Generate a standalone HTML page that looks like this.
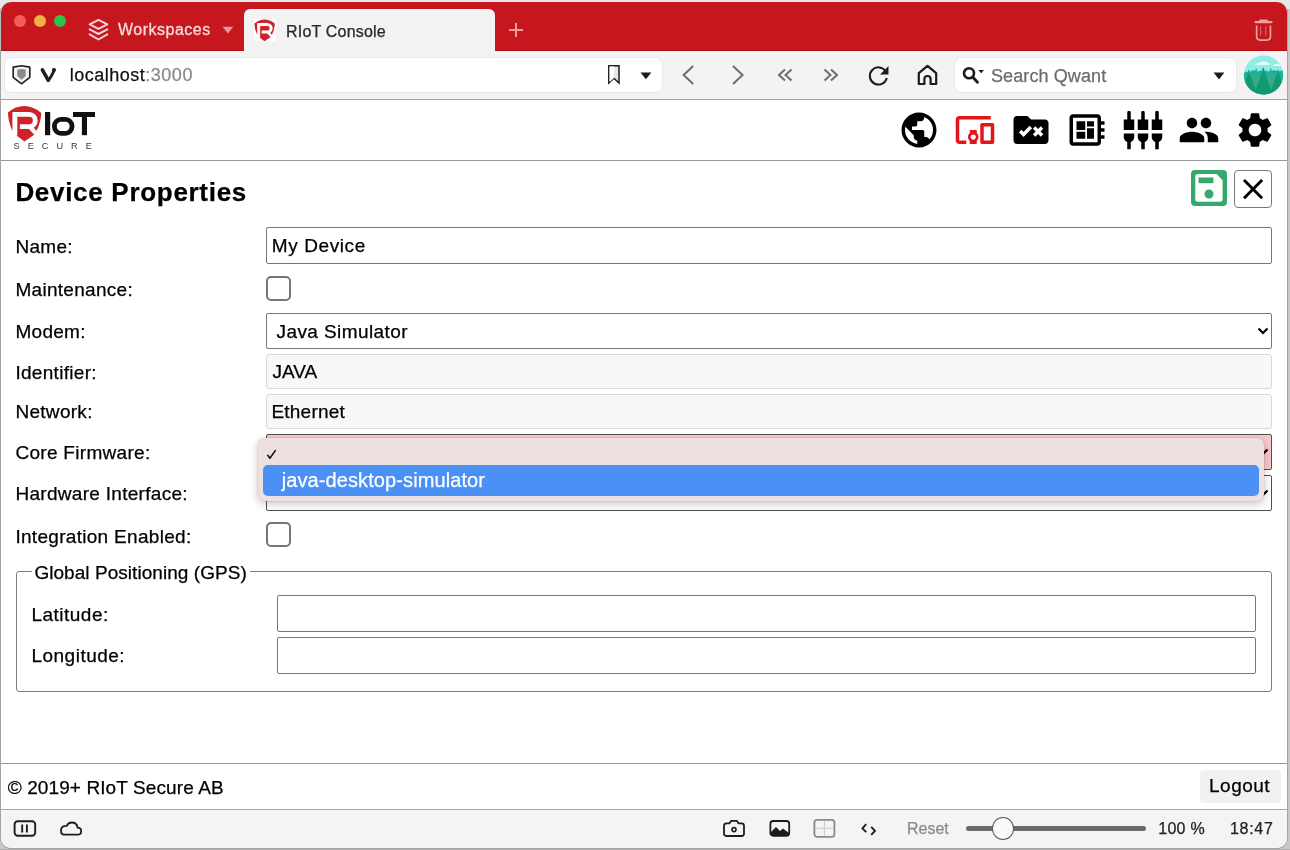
<!DOCTYPE html>
<html><head><meta charset="utf-8">
<style>
html,body{margin:0;padding:0;width:1290px;height:850px;overflow:hidden;background:#e6e7e7;font-family:"Liberation Sans",sans-serif;}
.a{position:absolute;}
.t{position:absolute;line-height:1;white-space:nowrap;-webkit-text-stroke:0.25px currentColor;}
svg{position:absolute;overflow:visible;}
#win{position:absolute;left:1px;top:2px;width:1286px;height:846px;border-radius:10px;overflow:hidden;background:#fff;}
#pg{position:absolute;left:-1px;top:-2px;width:1290px;height:850px;will-change:transform;}
.lbl{font-size:19px;color:#000;left:15.4px;letter-spacing:0.3px;}
.inp{position:absolute;box-sizing:border-box;background:#fff;border:1px solid #767676;border-radius:2px;}
.dis{position:absolute;box-sizing:border-box;background:#f8f8f8;border:1px solid #d9d9d9;border-radius:3px;}
.val{font-size:19px;color:#000;}
</style></head><body>
<div class="a" style="left:0;top:9px;width:1290px;height:841px;background:#c9c9c9;"></div>
<div class="a" style="left:0;top:849px;width:1290px;height:1px;background:#b0b0b0;"></div>
<div class="a" style="left:0;top:50px;width:1288px;height:799px;border-radius:0 0 11px 11px;background:#a4a4a4;"></div>
<div class="a" style="left:0;top:8px;width:1px;height:42px;background:#b7c2c2;"></div>
<div class="a" style="left:1287px;top:9px;width:1px;height:42px;background:#a8a8a8;"></div>
<div id="win"><div id="pg">

<!-- ============ TAB BAR ============ -->
<div class="a" style="left:0;top:0;width:1290px;height:51px;background:#c5171d;"></div>
<div class="a" style="left:0;top:50px;width:1290px;height:1px;background:#b20e14;"></div>
<div class="a" style="left:14px;top:15px;width:12px;height:12px;border-radius:50%;background:#f35e59;"></div>
<div class="a" style="left:34px;top:15px;width:12px;height:12px;border-radius:50%;background:#f1b145;"></div>
<div class="a" style="left:54px;top:15px;width:12px;height:12px;border-radius:50%;background:#31c048;"></div>
<!-- layers icon -->
<svg style="left:86px;top:17px" width="26" height="26" viewBox="0 0 26 26">
 <g fill="none" stroke="#f4d3d4" stroke-width="2" stroke-linejoin="round" stroke-linecap="round">
  <path d="M12.5 2.9 L21.3 7.4 L12.5 11.9 L3.7 7.4 Z"/>
  <path d="M3.7 12.4 L12.5 17 L21.3 12.4"/>
  <path d="M3.7 17.4 L12.5 22.5 L21.3 17.4"/>
 </g>
</svg>
<div class="t" style="left:118px;top:22.4px;font-size:16px;color:#f6d9da;letter-spacing:0.5px;-webkit-text-stroke:0.3px #f6d9da;">Workspaces</div>
<svg style="left:222px;top:26px" width="12" height="8" viewBox="0 0 12 8"><path d="M0.5 0.8 H11.3 L5.9 7.5 Z" fill="#e79a9d"/></svg>
<!-- active tab -->
<div class="a" style="left:244px;top:9px;width:251px;height:42px;background:#f3f3f3;border-radius:6px 6px 0 0;"></div>
<div class="a" style="left:254px;top:19px;width:22px;height:22px;background:#fff;"></div>
<svg style="left:252.3px;top:17.3px" width="27" height="27" viewBox="0 0 44 44">
 <path d="M3.9 10.4 Q20.5 -2.4 37.3 10.9 Q36.6 21 32.6 28.5 L29.8 33.1 L20.4 39.6 L11.9 33.1 L8.3 28.5 Q4.6 21 3.9 10.4 Z" fill="#d0202a"/>
 <path d="M10.85 33.2 V12.4 H25.2 A6.1 6.1 0 0 1 25.2 24.6 H15.8" fill="none" stroke="#fff" stroke-width="4.9"/>
 <path d="M26.2 25 L31.6 31.2" fill="none" stroke="#fff" stroke-width="4.3"/>
 <rect x="8" y="33.1" width="5" height="4" fill="#fff"/>
</svg>
<div class="t" style="left:286px;top:24px;font-size:16px;color:#262626;letter-spacing:0.2px;">RIoT Console</div>
<!-- plus -->
<svg style="left:508px;top:22px" width="16" height="16" viewBox="0 0 16 16"><path d="M8 1 V15 M1 8 H15" stroke="#ee9ea1" stroke-width="2"/></svg>
<!-- trash -->
<svg style="left:1252px;top:18px" width="22" height="26" viewBox="0 0 22 26">
 <path d="M3.5 4.1 H19.5" stroke="#ee9ea1" stroke-width="2.3" stroke-linecap="round"/>
 <path d="M6.5 3.2 L7.8 1.6 H15.2 L16.5 3.2 Z" fill="#ee9ea1"/>
 <path d="M4.65 7.6 V18.5 Q4.65 22.05 8.2 22.05 H14.9 Q18.45 22.05 18.45 18.5 V7.6" fill="none" stroke="#ee9ea1" stroke-width="1.7"/>
 <path d="M8.6 8.2 V17.5 M13.8 8.2 V17.5" stroke="#d96b70" stroke-width="1.1"/>
</svg>

<!-- ============ TOOLBAR ============ -->
<div class="a" style="left:0;top:51px;width:1290px;height:48px;background:#f3f3f3;"></div>
<div class="a" style="left:0;top:99px;width:1290px;height:1px;background:#a3a3a3;"></div>
<div class="a" style="left:5px;top:58px;width:657px;height:34px;background:#fff;border-radius:6px;box-shadow:0 0 0 1px #e9e9e9;"></div>
<!-- shield -->
<svg style="left:12px;top:64px" width="20" height="22" viewBox="0 0 20 22">
 <path d="M1.2 3.1 L9.5 1.8 L17.8 3.1 V13.3 L9.5 19.8 L1.2 13.3 Z" fill="#f2f2f2" stroke="#1f1f1f" stroke-width="1.6" stroke-linejoin="round"/>
 <path d="M5.3 5.4 L9.5 5 L13.7 5.4 V12.1 L9.5 15.8 L5.3 12.1 Z" fill="#898989"/>
</svg>
<!-- vivaldi V -->
<svg style="left:40px;top:67px" width="17" height="17" viewBox="0 0 17 17">
 <path d="M2.4 2.8 L8.3 13.3" fill="none" stroke="#1f1f1f" stroke-width="3.6" stroke-linecap="round"/>
 <path d="M13.9 3 Q13.6 6 8.5 13.3" fill="none" stroke="#1f1f1f" stroke-width="2.8" stroke-linecap="round"/>
 <circle cx="14" cy="3" r="2" fill="#1f1f1f"/>
</svg>
<div class="t" style="left:69.8px;top:66.2px;font-size:18px;color:#111;letter-spacing:0.5px;">localhost<span style="color:#8a8a8a">:3000</span></div>
<!-- bookmark -->
<svg style="left:606px;top:64px" width="16" height="22" viewBox="0 0 16 22">
 <path d="M2.8 1.8 H13 V19 L7.9 14.3 L2.8 19 Z" fill="#e6e6e6" stroke="#1c1c1c" stroke-width="1.5" stroke-linejoin="miter"/>
 <path d="M3.6 2.6 H8 V14 L3.6 18 Z" fill="#fff"/>
</svg>
<svg style="left:640px;top:72px" width="12" height="8" viewBox="0 0 12 8"><path d="M0.5 0.5 H11.3 L5.9 7.3 Z" fill="#1c1c1c"/></svg>
<!-- nav -->
<svg style="left:680px;top:64px" width="16" height="22" viewBox="0 0 16 22"><path d="M13.2 2 L3.6 11 L13.2 20" fill="none" stroke="#6d6d6d" stroke-width="2"/></svg>
<svg style="left:730px;top:64px" width="16" height="22" viewBox="0 0 16 22"><path d="M3 2 L12.6 11 L3 20" fill="none" stroke="#6d6d6d" stroke-width="2"/></svg>
<svg style="left:776px;top:67px" width="18" height="16" viewBox="0 0 18 16"><path d="M9 2.5 L3 8 L9 13.5 M15.5 2.5 L9.5 8 L15.5 13.5" fill="none" stroke="#6d6d6d" stroke-width="2"/></svg>
<svg style="left:822px;top:67px" width="18" height="16" viewBox="0 0 18 16"><path d="M2.5 2.5 L8.5 8 L2.5 13.5 M9 2.5 L15 8 L9 13.5" fill="none" stroke="#6d6d6d" stroke-width="2"/></svg>
<!-- reload -->
<svg style="left:867px;top:63px" width="24" height="24" viewBox="0 0 24 24">
 <path d="M18.8 8.5 A8.6 8.6 0 1 0 19.8 15" fill="none" stroke="#1c1c1c" stroke-width="2"/>
 <path d="M21.5 3 V11.5 H13 Z" fill="#1c1c1c"/>
</svg>
<!-- home -->
<svg style="left:916px;top:63px" width="24" height="24" viewBox="0 0 24 24">
 <path d="M2.8 21 V10.2 L11.5 2.8 L20.2 10.2 V21 H14.6 V16 Q14.6 13 11.5 13 Q8.4 13 8.4 16 V21 Z" fill="none" stroke="#1c1c1c" stroke-width="2.2" stroke-linejoin="round"/>
</svg>
<!-- search -->
<div class="a" style="left:955px;top:58px;width:281px;height:34px;background:#fff;border-radius:6px;box-shadow:0 0 0 1px #e9e9e9;"></div>
<svg style="left:962px;top:66px" width="24" height="19" viewBox="0 0 24 19">
 <circle cx="7" cy="7.3" r="5" fill="none" stroke="#1c1c1c" stroke-width="2.6"/>
 <path d="M10.6 11 L15.5 16.3" stroke="#1c1c1c" stroke-width="2.8" stroke-linecap="round"/>
 <path d="M16.3 4 H22 L19.15 7.2 Z" fill="#1c1c1c"/>
</svg>
<div class="t" style="left:991px;top:66.5px;font-size:18px;color:#6c6c6c;letter-spacing:0.1px;">Search Qwant</div>
<svg style="left:1213px;top:72px" width="12" height="8" viewBox="0 0 12 8"><path d="M0.6 0.5 H11.4 L6 7.4 Z" fill="#1c1c1c"/></svg>
<!-- avatar -->
<svg style="left:1243px;top:55px" width="41" height="41" viewBox="0 0 41 41">
 <defs><clipPath id="avc"><circle cx="20.5" cy="20" r="19.6"/></clipPath></defs>
 <g clip-path="url(#avc)">
  <rect width="41" height="41" fill="#8eeee6"/>
  <path d="M12 9.8 Q13 7.6 16 8 Q18 5.6 21.5 6.8 Q24.5 6.2 25.2 8.2 Q27 8.4 26.5 9.8 Z" fill="#fff" opacity="0.95"/>
  <path d="M29.5 11 Q31.5 8.2 35 9 Q37 9.4 38 11 Z" fill="#fff" opacity="0.9"/>
  <path d="M0 19 L3 16.5 L6 17.5 L10 15 L14 16.5 L20 15 L26 16.5 L31 15 L35 16.5 L41 15 V41 H0 Z" fill="#19b2a0"/>
  <path fill="#3aa98a" d="M13.2 12.7 L14.4 15.9 L13.1 15.9 L15.5 19.1 L14.2 19.1 L16.7 22.3 L15.4 22.3 L17.8 25.5 L16.5 25.5 L19.0 28.7 L17.7 28.7 L20.1 31.9 L18.8 31.9 L21.3 35.1 L20.0 35.1 L22.4 38.3 L21.1 38.3 L23.6 41.5 L22.3 41.5 L24.7 44.7 L23.4 44.7 L23.4 42.0 L3.0 42.0 L3.0 44.7 L1.7 44.7 L4.1 41.5 L2.8 41.5 L5.3 38.3 L4.0 38.3 L6.4 35.1 L5.1 35.1 L7.6 31.9 L6.3 31.9 L8.7 28.7 L7.4 28.7 L9.9 25.5 L8.6 25.5 L11.0 22.3 L9.7 22.3 L12.2 19.1 L10.9 19.1 L13.3 15.9 L12.0 15.9 Z M27.6 12.7 L28.8 15.9 L27.5 15.9 L29.9 19.1 L28.6 19.1 L31.1 22.3 L29.8 22.3 L32.2 25.5 L30.9 25.5 L33.4 28.7 L32.1 28.7 L34.5 31.9 L33.2 31.9 L35.7 35.1 L34.4 35.1 L36.8 38.3 L35.5 38.3 L38.0 41.5 L36.7 41.5 L39.1 44.7 L37.8 44.7 L37.8 42.0 L17.4 42.0 L17.4 44.7 L16.1 44.7 L18.5 41.5 L17.2 41.5 L19.7 38.3 L18.4 38.3 L20.8 35.1 L19.5 35.1 L22.0 31.9 L20.7 31.9 L23.1 28.7 L21.8 28.7 L24.3 25.5 L23.0 25.5 L25.4 22.3 L24.1 22.3 L26.6 19.1 L25.3 19.1 L27.7 15.9 L26.4 15.9 Z"/>
  <path fill="#149873" d="M20.3 11.9 L21.5 15.1 L20.2 15.1 L22.6 18.3 L21.3 18.3 L23.8 21.5 L22.5 21.5 L24.9 24.7 L23.6 24.7 L26.1 27.9 L24.8 27.9 L27.2 31.1 L25.9 31.1 L28.4 34.3 L27.1 34.3 L29.5 37.5 L28.2 37.5 L30.7 40.7 L29.4 40.7 L31.8 43.9 L30.5 43.9 L30.5 42.0 L10.1 42.0 L10.1 43.9 L8.8 43.9 L11.2 40.7 L9.9 40.7 L12.4 37.5 L11.1 37.5 L13.5 34.3 L12.2 34.3 L14.7 31.1 L13.4 31.1 L15.8 27.9 L14.5 27.9 L17.0 24.7 L15.7 24.7 L18.1 21.5 L16.8 21.5 L19.3 18.3 L18.0 18.3 L20.4 15.1 L19.1 15.1 Z M5.9 14.3 L7.1 17.5 L5.8 17.5 L8.2 20.7 L6.9 20.7 L9.4 23.9 L8.1 23.9 L10.5 27.1 L9.2 27.1 L11.7 30.3 L10.4 30.3 L12.8 33.5 L11.5 33.5 L14.0 36.7 L12.7 36.7 L15.1 39.9 L13.8 39.9 L16.3 43.1 L15.0 43.1 L15.0 42.0 L-3.2 42.0 L-3.2 43.1 L-4.5 43.1 L-2.0 39.9 L-3.3 39.9 L-0.9 36.7 L-2.2 36.7 L0.3 33.5 L-1.0 33.5 L1.4 30.3 L0.1 30.3 L2.6 27.1 L1.3 27.1 L3.7 23.9 L2.4 23.9 L4.9 20.7 L3.6 20.7 L6.0 17.5 L4.7 17.5 Z M34.9 14.3 L36.1 17.5 L34.8 17.5 L37.2 20.7 L35.9 20.7 L38.4 23.9 L37.1 23.9 L39.5 27.1 L38.2 27.1 L40.7 30.3 L39.4 30.3 L41.8 33.5 L40.5 33.5 L43.0 36.7 L41.7 36.7 L44.1 39.9 L42.8 39.9 L45.3 43.1 L44.0 43.1 L44.0 42.0 L25.8 42.0 L25.8 43.1 L24.5 43.1 L27.0 39.9 L25.7 39.9 L28.1 36.7 L26.8 36.7 L29.3 33.5 L28.0 33.5 L30.4 30.3 L29.1 30.3 L31.6 27.1 L30.3 27.1 L32.7 23.9 L31.4 23.9 L33.9 20.7 L32.6 20.7 L35.0 17.5 L33.7 17.5 Z"/>
 </g>
</svg>

<!-- ============ PAGE HEADER ============ -->
<div class="a" style="left:0;top:100px;width:1290px;height:60px;background:#fff;"></div>
<div class="a" style="left:0;top:160px;width:1290px;height:1px;background:#9a9a9a;"></div>
<!-- logo -->
<svg style="left:4px;top:102px" width="44" height="44" viewBox="0 0 44 44">
 <path d="M3.9 10.4 Q20.5 -2.4 37.3 10.9 Q36.6 21 32.6 28.5 L29.8 33.1 L20.4 39.6 L11.9 33.1 L8.3 28.5 Q4.6 21 3.9 10.4 Z" fill="#cf2127"/>
 <path d="M10.85 33.2 V12.4 H25.2 A6.1 6.1 0 0 1 25.2 24.6 H15.8" fill="none" stroke="#fff" stroke-width="4.9"/>
 <path d="M26.2 25 L31.6 31.2" fill="none" stroke="#fff" stroke-width="4.3"/>
 <rect x="8" y="33.1" width="5" height="4" fill="#fff"/>
</svg>
<svg style="left:40px;top:108px" width="60" height="32" viewBox="0 0 60 32">
 <rect x="5" y="4" width="5.2" height="23.2" fill="#111"/>
 <rect x="14.4" y="11.4" width="17.6" height="13.9" rx="6.6" fill="none" stroke="#111" stroke-width="4.8"/>
 <rect x="33" y="4" width="22" height="5" fill="#111"/>
 <rect x="41.9" y="4" width="5.1" height="23.2" fill="#111"/>
</svg>
<div class="t" style="left:13.5px;top:142.2px;font-size:9.2px;color:#3a3a3a;letter-spacing:8.0px;-webkit-text-stroke:0;">SECURE</div>

<!-- nav icons (material, 42px) -->
<svg style="left:898px;top:109px" width="42" height="42" viewBox="0 0 24 24"><path fill="#000" d="M12 2C6.48 2 2 6.48 2 12s4.48 10 10 10 10-4.48 10-10S17.52 2 12 2zm-1 17.93c-3.95-.49-7-3.85-7-7.93 0-.62.08-1.21.21-1.79L9 15v1c0 1.1.9 2 2 2v1.93zm6.9-2.54c-.26-.81-1-1.39-1.9-1.39h-1v-3c0-.55-.45-1-1-1H8v-2h2c.55 0 1-.45 1-1V7h2c1.1 0 2-.9 2-2v-.41c2.93 1.19 5 4.06 5 7.41 0 2.08-.8 3.97-2.1 5.39z"/></svg>
<svg style="left:954px;top:109px" width="42" height="42" viewBox="0 0 24 24"><path fill="#e3151b" d="M3 6h18V4H3c-1.1 0-2 .9-2 2v12c0 1.1.9 2 2 2h4v-2H3V6zm10 6H9v1.78c-.61.55-1 1.33-1 2.22s.39 1.67 1 2.22V20h4v-1.78c.61-.55 1-1.34 1-2.22s-.39-1.67-1-2.22V12zm-2 5.5c-.83 0-1.5-.67-1.5-1.5s.67-1.5 1.5-1.5 1.5.67 1.5 1.5-.67 1.5-1.5 1.5zM22 8h-6c-.5 0-1 .5-1 1v10c0 .5.5 1 1 1h6c.5 0 1-.5 1-1V9c0-.5-.5-1-1-1zm-1 10h-4v-8h4v8z"/></svg>
<svg style="left:1010px;top:109px" width="42" height="42" viewBox="0 0 24 24">
 <path fill="#000" d="M20 6h-8l-2-2H4c-1.1 0-1.99.9-1.99 2L2 18c0 1.1.9 2 2 2h16c1.1 0 2-.9 2-2V8c0-1.1-.9-2-2-2z"/>
 <path d="M5.8 12.6 L7.75 14.55 L11.9 10.3" fill="none" stroke="#fff" stroke-width="2"/><path d="M13.8 10.6 L18.3 15.1 M18.3 10.6 L13.8 15.1" fill="none" stroke="#fff" stroke-width="2"/>
</svg>
<svg style="left:1066px;top:109px" width="42" height="42" viewBox="0 0 24 24"><path fill="#000" d="M22 9V7h-2V5c0-1.1-.9-2-2-2H4c-1.1 0-2 .9-2 2v14c0 1.1.9 2 2 2h14c1.1 0 2-.9 2-2v-2h2v-2h-2v-2h2v-2h-2V9h2zm-4 10H4V5h14v14zM6 13h5v4H6zm6-6h4v3h-4zM6 7h5v5H6zm6 4h4v6h-4z"/></svg>
<svg style="left:1122px;top:109px" width="42" height="42" viewBox="0 0 24 24"><path fill="#000" d="M5 2c0-.55-.45-1-1-1s-1 .45-1 1v4H1v6h6V6H5V2zm4 14c0 1.3.84 2.4 2 2.82V23h2v-4.18c1.16-.41 2-1.51 2-2.82v-2H9v2zm-8 0c0 1.3.84 2.4 2 2.82V23h2v-4.18C6.16 18.4 7 17.3 7 16v-2H1v2zM21 6V2c0-.55-.45-1-1-1s-1 .45-1 1v4h-2v6h6V6h-2zm-8-4c0-.55-.45-1-1-1s-1 .45-1 1v4H9v6h6V6h-2V2zm4 14c0 1.3.84 2.4 2 2.82V23h2v-4.18c1.16-.41 2-1.51 2-2.82v-2h-6v2z"/></svg>
<svg style="left:1178px;top:109px" width="42" height="42" viewBox="0 0 24 24"><path fill="#000" d="M16 11c1.66 0 2.99-1.34 2.99-3S17.66 5 16 5c-1.66 0-3 1.34-3 3s1.34 3 3 3zm-8 0c1.66 0 2.99-1.34 2.99-3S9.66 5 8 5C6.34 5 5 6.34 5 8s1.34 3 3 3zm0 2c-2.33 0-7 1.17-7 3.5V19h14v-2.5c0-2.33-4.67-3.5-7-3.5zm8 0c-.29 0-.62.02-.97.05 1.16.84 1.97 1.97 1.97 3.45V19h6v-2.5c0-2.33-4.67-3.5-7-3.5z"/></svg>
<svg style="left:1234px;top:109px" width="42" height="42" viewBox="0 0 24 24"><path fill="#000" d="M19.14 12.94c.04-.3.06-.61.06-.94 0-.32-.02-.64-.07-.94l2.03-1.58c.18-.14.23-.41.12-.61l-1.92-3.32c-.12-.22-.37-.29-.59-.22l-2.39.96c-.5-.38-1.030-.7-1.62-.94l-.36-2.54c-.04-.24-.24-.41-.48-.41h-3.84c-.24 0-.43.17-.47.41l-.36 2.54c-.59.24-1.13.57-1.62.94l-2.39-.96c-.22-.08-.47 0-.59.22L2.74 8.87c-.12.21-.08.47.12.61l2.03 1.58c-.05.3-.09.63-.09.94s.02.64.07.94l-2.030 1.58c-.18.14-.23.41-.12.61l1.92 3.32c.12.22.37.29.59.22l2.39-.96c.5.38 1.03.7 1.62.94l.36 2.54c.05.24.24.41.48.41h3.84c.24 0 .44-.17.47-.41l.36-2.54c.59-.24 1.13-.56 1.62-.94l2.39.96c.22.08.47 0 .59-.22l1.92-3.32c.12-.22.07-.47-.12-.61l-2.01-1.58zM12 15.6c-1.98 0-3.6-1.62-3.6-3.6s1.62-3.6 3.6-3.6 3.6 1.62 3.6 3.6-1.62 3.6-3.6 3.6z"/></svg>

<!-- ============ CONTENT ============ -->
<div class="t" style="left:15.4px;top:178.9px;font-size:26px;font-weight:bold;color:#000;letter-spacing:0.7px;">Device Properties</div>
<!-- save -->
<div class="a" style="left:1191px;top:170px;width:36px;height:36px;background:#34a96b;border-radius:4px;"></div>
<svg style="left:1191px;top:170px" width="36" height="36" viewBox="0 0 36 36">
 <path d="M6.8 4 H25.6 L31.6 10.2 V29.3 Q31.6 31.8 29.1 31.8 H6.8 Q4.3 31.8 4.3 29.3 V6.5 Q4.3 4 6.8 4 Z" fill="#fff"/>
 <rect x="7.6" y="7.5" width="14.8" height="5.7" fill="#34a96b"/>
 <circle cx="18" cy="24" r="4.5" fill="#34a96b"/>
</svg>
<!-- close -->
<div class="a" style="left:1234px;top:170px;width:38px;height:38px;box-sizing:border-box;border:1px solid #7a7a7a;border-radius:4px;background:#fff;"></div>
<svg style="left:1234px;top:170px" width="38" height="38" viewBox="0 0 38 38"><path d="M10 9.9 L28.1 28.2 M28.1 9.9 L10 28.2" stroke="#000" stroke-width="2.9"/></svg>

<!-- labels -->
<div class="t lbl" style="top:236.9px;">Name:</div>
<div class="t lbl" style="top:279.8px;">Maintenance:</div>
<div class="t lbl" style="top:321.9px;">Modem:</div>
<div class="t lbl" style="top:362.7px;">Identifier:</div>
<div class="t lbl" style="top:402.4px;">Network:</div>
<div class="t lbl" style="top:442.8px;">Core Firmware:</div>
<div class="t lbl" style="top:483.6px;">Hardware Interface:</div>
<div class="t lbl" style="top:526.6px;">Integration Enabled:</div>

<!-- Name -->
<div class="inp" style="left:266px;top:227px;width:1006px;height:37px;"></div>
<div class="t val" style="left:271.8px;top:236.2px;letter-spacing:0.6px;">My Device</div>
<!-- maintenance checkbox -->
<div class="a" style="left:266px;top:276px;width:25px;height:25px;box-sizing:border-box;border:2px solid #767676;border-radius:5px;background:#fff;"></div>
<!-- modem select -->
<div class="inp" style="left:266px;top:313px;width:1006px;height:36px;"></div>
<div class="t val" style="left:276.6px;top:321.9px;letter-spacing:0.4px;">Java Simulator</div>
<svg style="left:1256px;top:325px" width="14" height="12" viewBox="0 0 14 12"><path d="M2.5 3.5 L7 8 L11.5 3.5" fill="none" stroke="#000" stroke-width="2.2"/></svg>
<!-- identifier -->
<div class="dis" style="left:266px;top:354px;width:1006px;height:35px;"></div>
<div class="t val" style="left:272.5px;top:362.2px;">JAVA</div>
<!-- network -->
<div class="dis" style="left:266px;top:394px;width:1006px;height:35px;"></div>
<div class="t val" style="left:271.5px;top:402.4px;letter-spacing:0.2px;">Ethernet</div>
<!-- core firmware -->
<div class="inp" style="left:266px;top:434px;width:1006px;height:36px;background:#f8c8ca;border-color:#505050;"></div>
<svg style="left:1256px;top:446px" width="14" height="12" viewBox="0 0 14 12"><path d="M2.5 3.5 L7 8 L11.5 3.5" fill="none" stroke="#000" stroke-width="2.2"/></svg>
<!-- hardware -->
<div class="inp" style="left:266px;top:475px;width:1006px;height:36px;border-color:#505050;"></div>
<svg style="left:1256px;top:487px" width="14" height="12" viewBox="0 0 14 12"><path d="M2.5 3.5 L7 8 L11.5 3.5" fill="none" stroke="#000" stroke-width="2.2"/></svg>
<!-- integration checkbox -->
<div class="a" style="left:266px;top:522px;width:25px;height:25px;box-sizing:border-box;border:2px solid #767676;border-radius:5px;background:#fff;"></div>

<!-- popup -->
<div class="a" style="left:257.5px;top:438px;width:1006.5px;height:63px;background:#ece0e1;border-radius:7px;box-shadow:0 3px 10px rgba(0,0,0,0.22), 0 0 0 0.5px rgba(0,0,0,0.12);"></div>
<svg style="left:266px;top:449px" width="11" height="11" viewBox="0 0 11 11"><path d="M1.8 6.3 L3.9 9.2 L9.3 1.6" fill="none" stroke="#111" stroke-width="1.55" stroke-linecap="round" stroke-linejoin="round"/></svg>
<div class="a" style="left:263px;top:465px;width:996px;height:31px;background:#4a90f5;border-radius:5px;"></div>
<div class="t" style="left:281.7px;top:470px;font-size:20px;color:#fff;letter-spacing:0.1px;">java-desktop-simulator</div>

<!-- fieldset -->
<div class="a" style="left:16px;top:571px;width:1256px;height:121px;box-sizing:border-box;border:1px solid #7d7d7d;border-radius:3px;"></div>
<div class="a" style="left:32px;top:565px;width:218px;height:12px;background:#fff;"></div>
<div class="t" style="left:34.4px;top:562.9px;font-size:19px;color:#000;letter-spacing:0.05px;">Global Positioning (GPS)</div>
<div class="t" style="left:31.4px;top:604.5px;font-size:19px;color:#000;letter-spacing:0.5px;">Latitude:</div>
<div class="t" style="left:31.4px;top:646.1px;font-size:19px;color:#000;letter-spacing:0.5px;">Longitude:</div>
<div class="inp" style="left:277px;top:595px;width:979px;height:37px;"></div>
<div class="inp" style="left:277px;top:637px;width:979px;height:37px;"></div>

<!-- ============ FOOTER ============ -->
<div class="a" style="left:0;top:763px;width:1290px;height:1px;background:#9a9a9a;"></div>
<div class="t" style="left:7.7px;top:777.9px;font-size:19px;color:#000;letter-spacing:0.1px;">© 2019+ RIoT Secure AB</div>
<div class="a" style="left:1200px;top:770px;width:81px;height:33px;background:#f1f1f1;border-radius:4px;"></div>
<div class="t" style="left:1209px;top:776.4px;font-size:19px;color:#000;letter-spacing:0.5px;">Logout</div>

<!-- ============ STATUS BAR ============ -->
<div class="a" style="left:0;top:809px;width:1290px;height:1px;background:#a9a9a9;"></div>
<div class="a" style="left:0;top:810px;width:1290px;height:40px;background:#f4f4f4;"></div>
<svg style="left:12px;top:819px" width="26" height="20" viewBox="0 0 26 20">
 <rect x="2.6" y="2.3" width="20.6" height="14.5" rx="3.2" fill="none" stroke="#1c1c1c" stroke-width="1.9"/>
 <path d="M10.2 5.6 V13.4 M14.9 5.6 V13.4" stroke="#1c1c1c" stroke-width="1.9"/>
</svg>
<svg style="left:58px;top:819px" width="26" height="20" viewBox="0 0 26 20">
 <path d="M6 15.7 H19.5 Q23.2 15.7 23.2 12.2 Q23.2 8.8 19.6 8.6 Q18.8 3.5 13.8 3.5 Q10.2 3.5 8.7 6.8 Q3 6.6 3 11.6 Q3 15.7 6 15.7 Z" fill="none" stroke="#1c1c1c" stroke-width="1.8"/>
</svg>
<!-- camera -->
<svg style="left:722px;top:818px" width="24" height="20" viewBox="0 0 24 20">
 <path d="M4.6 5.3 H7.5 L9.2 2.8 H14.8 L16.5 5.3 H19.4 Q22 5.3 22 7.8 V15.8 Q22 18 19.6 18 H4.4 Q2 18 2 15.8 V7.8 Q2 5.3 4.6 5.3 Z" fill="none" stroke="#1c1c1c" stroke-width="1.8" stroke-linejoin="round"/>
 <circle cx="12" cy="11.6" r="2" fill="none" stroke="#1c1c1c" stroke-width="1.6"/>
</svg>
<!-- image -->
<svg style="left:768px;top:818px" width="24" height="20" viewBox="0 0 24 20">
 <rect x="2.4" y="3" width="18.8" height="14.8" rx="2.8" fill="none" stroke="#1c1c1c" stroke-width="1.8"/>
 <path d="M3 17.5 V14 L8 9 L12 13 L15 10.5 L21 15 V17.5 Z" fill="#1c1c1c"/>
</svg>
<!-- grid -->
<svg style="left:812px;top:818px" width="24" height="20" viewBox="0 0 24 20">
 <rect x="2.4" y="1.8" width="20" height="17" rx="2.6" fill="none" stroke="#8a8a8a" stroke-width="1.8"/>
 <path d="M12.4 2.5 V18 M3 10.3 H22" stroke="#c8c8c8" stroke-width="1"/>
</svg>
<!-- code -->
<svg style="left:860px;top:820px" width="18" height="18" viewBox="0 0 18 18">
 <path d="M6.2 4.2 L2.4 8.3 L6.2 12.2 M11.2 6.8 L15 10.8 L11.2 14.8" fill="none" stroke="#1c1c1c" stroke-width="1.9" stroke-linejoin="round"/>
</svg>
<div class="t" style="left:907px;top:820.7px;font-size:16px;color:#8a8a8a;">Reset</div>
<div class="a" style="left:966px;top:825.5px;width:180px;height:5px;background:#6b6b6b;border-radius:3px;"></div>
<div class="a" style="left:991.7px;top:817px;width:22px;height:22.5px;box-sizing:border-box;border-radius:50%;background:#fafafa;border:1px solid #5c5c5c;"></div>
<div class="t" style="left:1158.2px;top:820.7px;font-size:16px;color:#222;letter-spacing:0.3px;">100 %</div>
<div class="t" style="left:1230px;top:820.7px;font-size:16px;color:#222;letter-spacing:0.7px;">18:47</div>

</div></div>
</body></html>
